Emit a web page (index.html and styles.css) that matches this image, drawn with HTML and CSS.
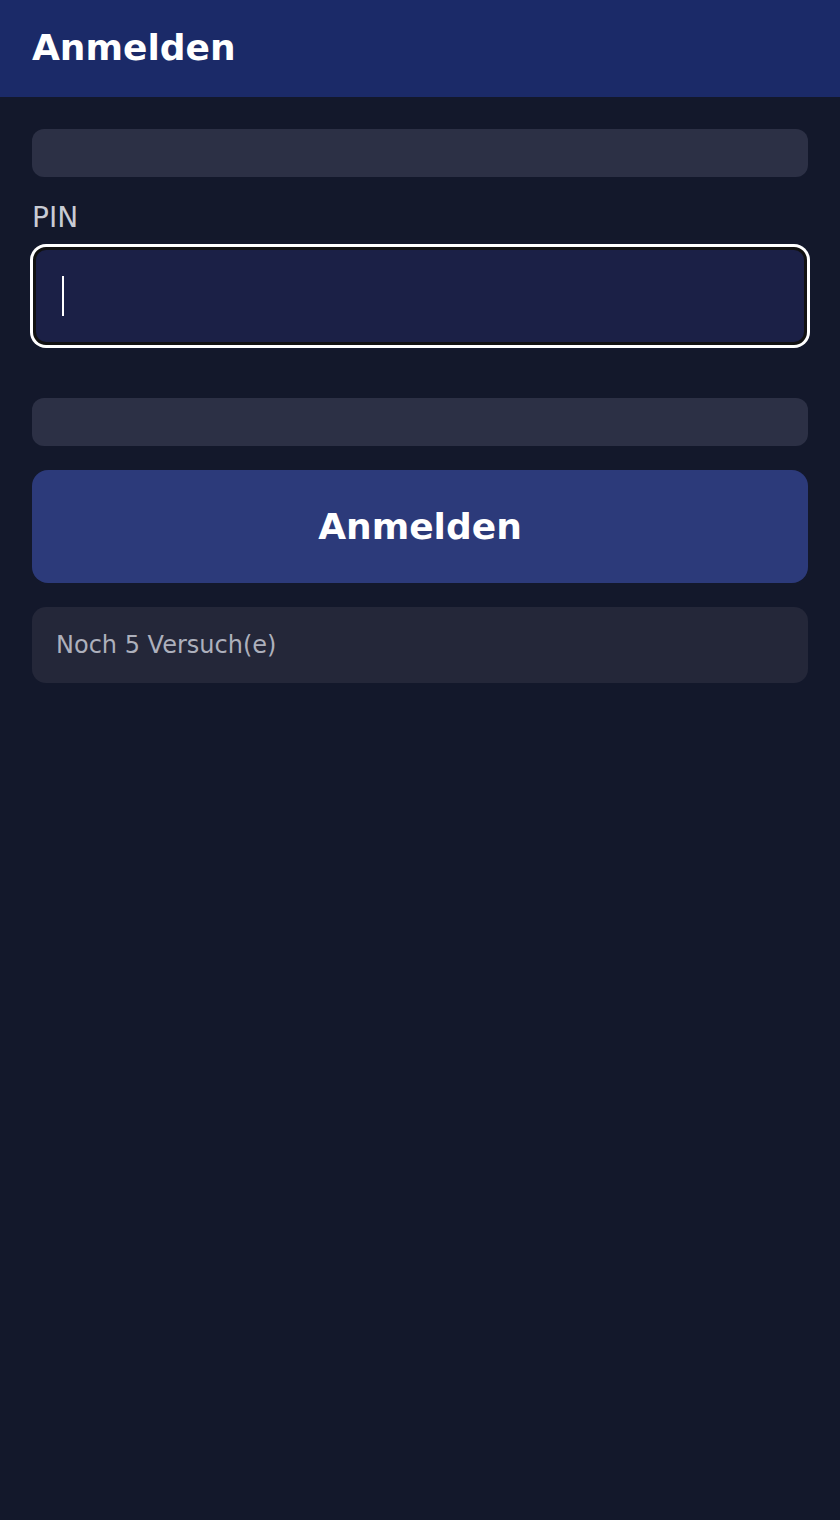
FILE: index.html
```html
<!DOCTYPE html>
<html lang="de">
<head>
<meta charset="utf-8">
<title>Anmelden</title>
<link rel="stylesheet" href="styles.css">
</head>
<body>
<header class="topbar">
  <h1 class="title">Anmelden</h1>
</header>
<main class="content">
  <div class="placeholder-bar"></div>
  <label class="field-label" for="pin">PIN</label>
  <div class="pin-input" id="pin" role="textbox" aria-label="PIN"><span class="caret"></span></div>
  <div class="placeholder-bar bar-second"></div>
  <button class="submit" type="button">Anmelden</button>
  <div class="info">Noch 5 Versuch(e)</div>
</main>
</body>
</html>
```

FILE: styles.css
```css
* { box-sizing: border-box; }
html, body {
  margin: 0;
  padding: 0;
  background: #13182b;
  font-family: "DejaVu Sans", "Liberation Sans", sans-serif;
  min-height: 1520px;
}
.topbar {
  height: 97px;
  background: #1b2a68;
  display: flex;
  align-items: center;
  padding: 0 32px;
}
.title {
  margin: 0;
  color: #ffffff;
  font-size: 36px;
  font-weight: bold;
  line-height: 1;
  padding-bottom: 2px;
}
.content {
  padding: 32px 32px;
  display: flex;
  flex-direction: column;
}
.placeholder-bar {
  height: 48px;
  border-radius: 12px;
  background: #2c3045;
}
.field-label {
  margin-top: 24px;
  margin-bottom: 12px;
  color: #c8cbd4;
  font-size: 28px;
  line-height: 1.2;
}
.pin-input {
  height: 98px;
  margin: 0 1px;
  border: 3px solid #111111;
  box-shadow: 0 0 0 3px #ffffff;
  border-radius: 13px;
  background: #1b2046;
  display: flex;
  align-items: center;
  padding-left: 26px;
}
.caret {
  display: block;
  width: 2px;
  height: 40px;
  background: #ffffff;
}
.bar-second {
  margin-top: 53px;
}
.submit {
  margin-top: 24px;
  height: 113px;
  border: none;
  border-radius: 16px;
  background: #2c3a7a;
  color: #ffffff;
  font-family: "DejaVu Sans", "Liberation Sans", sans-serif;
  font-size: 36px;
  font-weight: bold;
  padding: 0;
}
.info {
  margin-top: 24px;
  height: 76px;
  border-radius: 14px;
  background: #242739;
  color: #adb0bc;
  font-size: 24px;
  display: flex;
  align-items: center;
  padding: 0 24px;
}
```
